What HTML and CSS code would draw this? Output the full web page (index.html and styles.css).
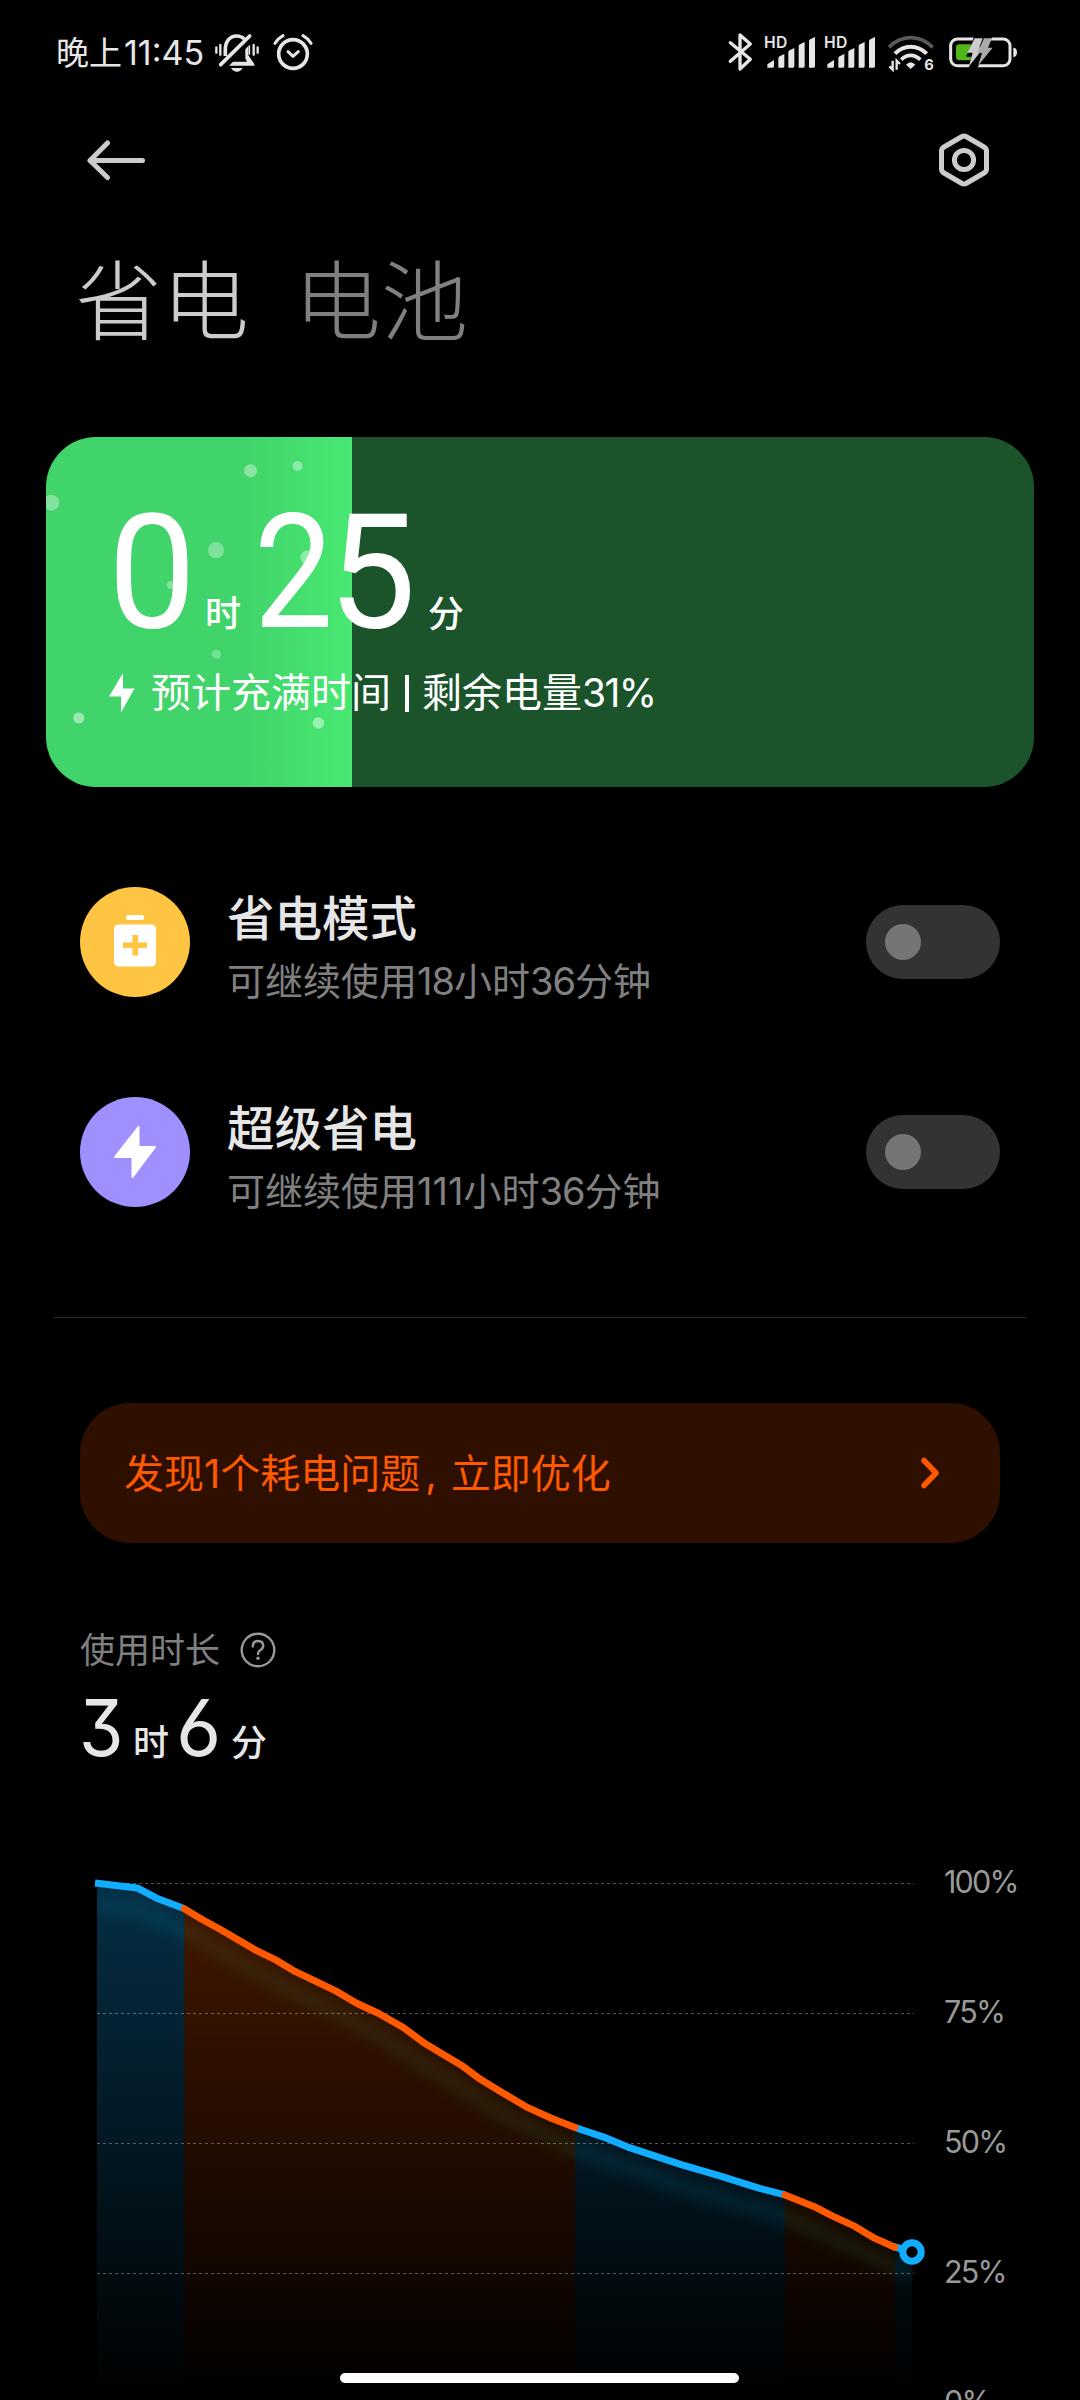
FILE: index.html
```html
<!DOCTYPE html>
<html lang="zh-CN">
<head>
<meta charset="utf-8">
<title>省电</title>
<link rel="stylesheet" href="styles.css">
</head>
<body>
<div class="phone">
  <header class="status">
    <div class="status-left">
      <span class="clock"><span class="clock-cjk">晚上</span>11:45</span>
      <svg class="ico-bell" width="46" height="40" viewBox="522 36 138 120" fill="none" stroke="#e6e6e6">
        <path d="M556 108V88c0-24 14-40 34-40 9 0 17 3 23 9" stroke-width="11"/>
        <path d="M625 78v28l18 26v5h-76l12-12h42l-5-10V88z" fill="#e6e6e6" stroke="none"/>
        <path d="M573 144h35c-4 7-10 11-17 11s-14-4-18-11z" fill="#e6e6e6" stroke="none"/>
        <path d="M542 134L629 48" stroke-width="11" stroke-linecap="round"/>
        <path d="M529 82v16M541 75v29M641 75v29M653 82v16" stroke-width="7" stroke-linecap="round"/>
        <path d="M628 78v24" stroke-width="5" stroke-linecap="round"/>
      </svg>
      <svg class="ico-alarm" width="40" height="38" viewBox="700 38 120 114" fill="none" stroke="#e6e6e6" stroke-linecap="round">
        <circle cx="760" cy="101" r="43" stroke-width="11"/>
        <path d="M706 69q8-14 24-23M814 69q-8-14-24-23" stroke-width="9"/>
        <path d="M745 94l15 14 16-14" stroke-width="9" stroke-linejoin="round"/>
      </svg>
    </div>
    <div class="status-right">
      <svg class="ico-bt" width="28" height="40" viewBox="82 35 84 120" fill="none" stroke="#e6e6e6" stroke-width="10" stroke-linecap="round" stroke-linejoin="round">
        <path d="M92 67l60 50-31 29V44l31 27-60 52"/>
      </svg>
      <svg class="ico-sig" width="52" height="36" viewBox="192 42 156 108" fill="#e6e6e6">
        <text x="192" y="83" class="hd">HD</text>
        <path d="M202 143v-10l20-13v19q0 4-4 4zM235 143v-28q0-4 4-6l14-7v37q0 4-4 4zM265 143V97q0-4 4-6l14-7v55q0 4-4 4zM296 143V79q0-4 4-6l14-7v73q0 4-4 4zM327 143V64q0-4 4-6l14-7v88q0 4-4 4z"/>
      </svg>
      <svg class="ico-sig" width="52" height="36" viewBox="192 42 156 108" fill="#e6e6e6">
        <text x="192" y="83" class="hd">HD</text>
        <path d="M202 143v-10l20-13v19q0 4-4 4zM235 143v-28q0-4 4-6l14-7v37q0 4-4 4zM265 143V97q0-4 4-6l14-7v55q0 4-4 4zM296 143V79q0-4 4-6l14-7v73q0 4-4 4zM327 143V64q0-4 4-6l14-7v88q0 4-4 4z"/>
      </svg>
      <svg class="ico-wifi" width="48" height="38" viewBox="561 42 144 114" fill="none" stroke="#e6e6e6">
        <path d="M567 82q28-29 65-29t66 29" stroke="#595959" stroke-width="11"/>
        <path d="M585 101q20-21 47-21t48 21" stroke-width="12"/>
        <path d="M604 119q12-13 28-13t29 13" stroke-width="11"/>
        <path d="M618 134q14-15 28 0l-14 13z" fill="#e6e6e6" stroke="none"/>
        <path d="M578 122v27l-10-10M590 149v-27l10 10" stroke-width="7"/>
        <text x="673" y="149" class="six" fill="#e6e6e6" stroke="none">6</text>
      </svg>
      <svg class="ico-batt" width="70" height="34" viewBox="744 47 210 102" fill="none">
        <rect x="752" y="56" width="178" height="80" rx="20" stroke="#e6e6e6" stroke-width="9"/>
        <path d="M940 82q11 0 11 14t-11 14z" fill="#e6e6e6"/>
        <path d="M778 72h40l-20 36h18l-4 12h-34q-10 0-10-10V82q0-10 10-10z" fill="#52b51a"/>
        <path d="M822 49h54l-14 42-30 52h-26l8-34h-14z" fill="#000"/>
        <path d="M824 54h24l-10 27h14l-46 58 12-42h-16z" fill="#ccc"/>
        <path d="M852 54h24l-12 28h14l-44 54 12-38h-14z" fill="#aaa"/>
      </svg>
    </div>
  </header>

  <nav class="topbar">
    <svg width="60" height="42" viewBox="0 0 60 42" fill="none" stroke="#ccc" stroke-width="5" stroke-linecap="round" stroke-linejoin="round">
      <path d="M21.500 4L4 21.500 21.500 38.500M4 21.500h52.500"/>
    </svg>
    <svg width="52" height="56" viewBox="0 0 52 56" fill="none" stroke="#ccc" stroke-width="5" stroke-linejoin="round">
      <path d="M24 4.500q2-1 4 0l18 10.500q2.500 1.500 2.500 4v18q0 2.500-2.500 4l-18 10.500q-2 1-4 0l-18-10.500q-2.500-1.500-2.500-4V19q0-2.500 2.500-4z"/>
      <circle cx="26" cy="28" r="9.600"/>
    </svg>
  </nav>

  <div class="tabs">
    <h1 class="tab tab-active">省电</h1>
    <h1 class="tab">电池</h1>
  </div>

  <section class="card">
    <svg class="bubbles" width="306" height="350" viewBox="46 437 306 350" fill="#fff">
      <circle cx="250.600" cy="470.700" r="6.500" opacity=".38"/>
      <circle cx="297.600" cy="466" r="5" opacity=".38"/>
      <circle cx="51.400" cy="502.700" r="8" opacity=".35"/>
      <circle cx="216" cy="550" r="8" opacity=".33"/>
      <circle cx="307.500" cy="557.500" r="7" opacity=".4"/>
      <circle cx="171" cy="585" r="4" opacity=".35"/>
      <circle cx="216.500" cy="654.300" r="4.600" opacity=".28"/>
      <circle cx="78.800" cy="718" r="5.500" opacity=".48"/>
      <circle cx="318.400" cy="723" r="5.800" opacity=".45"/>
    </svg>
    <div class="card-body">
      <div class="remain"><span class="big d0">0</span><span class="unit u0">时</span><span class="big d2">2</span><span class="big d5">5</span><span class="unit">分</span></div>
      <div class="charge">
        <svg width="26" height="40" viewBox="0 0 26 40" fill="#fff"><path d="M14 0v15.500h11.500L12 39.500V23.500H0z"/></svg>
        <span class="charge-text">预计充满时间<i class="bar"></i>剩余电量<span class="pct">31%</span></span>
      </div>
    </div>
  </section>

  <section class="modes">
    <div class="mode">
      <span class="badge amber">
        <svg width="44" height="54" viewBox="0 0 44 54" fill="#fff">
          <rect x="13" y="0" width="18" height="5" rx="2"/>
          <path fill-rule="evenodd" d="M6 9.500h32q5 0 5 5v32q0 5-5 5H6q-5 0-5-5v-32q0-5 5-5zm13.500 10.500v7.500H10v5.500h9.500v7.500h5.500V33h9v-5.500h-9V20z"/>
        </svg>
      </span>
      <div class="mode-text">
        <div class="mode-title">省电模式</div>
        <div class="mode-sub">可继续使用<span class="lat">18</span>小时<span class="lat">36</span>分钟</div>
      </div>
      <span class="toggle"><span class="knob"></span></span>
    </div>
    <div class="mode">
      <span class="badge violet">
        <svg width="44" height="54" viewBox="0 0 44 54" fill="#fff" stroke="#fff" stroke-width="2" stroke-linejoin="round">
          <path d="M25.500 2v20H42L19.500 52V32H2z"/>
        </svg>
      </span>
      <div class="mode-text">
        <div class="mode-title">超级省电</div>
        <div class="mode-sub">可继续使用<span class="ones">111</span>小时<span class="lat">36</span>分钟</div>
      </div>
      <span class="toggle"><span class="knob"></span></span>
    </div>
  </section>

  <hr class="rule">

  <section class="alert">
    <span class="alert-text">发现1个耗电问题<span class="comma">,</span>立即优化</span>
    <svg width="20" height="32" viewBox="0 0 20 32" fill="none" stroke="#ff5900" stroke-width="5.500" stroke-linecap="round" stroke-linejoin="round"><path d="M4 3.500L16 16 4 28.500"/></svg>
  </section>

  <section class="usage">
    <div class="usage-label">使用时长
      <svg width="36" height="36" viewBox="0 0 36 36" fill="none" stroke="#999" stroke-width="2.400">
        <circle cx="18" cy="18" r="16.300"/>
        <path d="M12.800 14.500q0-5.500 5.200-5.500t5.200 4.800q0 2.700-2.800 4.300-2.400 1.500-2.400 4" stroke-linecap="round"/>
        <circle cx="18" cy="26.200" r="1.700" fill="#999" stroke="none"/>
      </svg>
    </div>
    <div class="usage-value"><span class="mid m3">3</span><span class="unit u1">时</span><span class="mid m6">6</span><span class="unit">分</span></div>
  </section>

  <section class="chart">
    <svg class="plot" width="840" height="550" viewBox="90 1860 840 550" fill="none">
      <defs>
        <linearGradient id="blue" gradientUnits="userSpaceOnUse" x1="0" y1="1883" x2="0" y2="2403">
          <stop offset="0" stop-color="#12adff" stop-opacity=".27"/><stop offset="1" stop-color="#12adff" stop-opacity="0"/>
        </linearGradient>
        <linearGradient id="orange" gradientUnits="userSpaceOnUse" x1="0" y1="1883" x2="0" y2="2403">
          <stop offset="0" stop-color="#ff5900" stop-opacity=".27"/><stop offset="1" stop-color="#ff5900" stop-opacity="0"/>
        </linearGradient>
        <clipPath id="area"><path d="M97 1883L137.300 1888 156.700 1898.200 184.300 1908.600 201.700 1919.300 220 1929.300 256.700 1950.700 276.700 1960.400 295 1971.400 336.700 1991.400 356.700 2003.200 378.300 2013.200 403.300 2027.500 425 2043.600 461.700 2065.400 480.700 2079.600 503.300 2093.200 528.300 2107.900 552 2118.500 575 2127.500 603.700 2137.100 630.200 2147.900 681.200 2164.600 719 2175.700 760.400 2188.600 785 2194.800 813.800 2206.400 832.700 2216.100 855 2226.400 874 2237.900 894.700 2247.300 912 2252V2403H97z"/></clipPath>
        <clipPath id="cool"><path d="M97 1860h87.300v543H97zM575 1860h210v543H575zM894.700 1860H912v543h-17.300z"/></clipPath>
        <clipPath id="warm"><path d="M184.300 1860H575v543H184.300zM785 1860h109.700v543H785z"/></clipPath>
        <filter id="soft" x="-5%" y="-10%" width="110%" height="120%"><feGaussianBlur stdDeviation="6"/></filter>
        <path id="echo" filter="url(#soft)" transform="translate(0 22)" stroke-width="17" d="M97 1883L137.300 1888 184.300 1908.600 256.700 1950.700 378.300 2013.200 425 2043.600 503.300 2093.200 575 2127.500 681.200 2164.600 785 2194.800 855 2226.400 912 2252"/>
      </defs>
      <g clip-path="url(#area)">
        <g clip-path="url(#cool)">
          <path d="M97 1860h815v543H97z" fill="url(#blue)"/>
          <use href="#echo" stroke="#1e96be" stroke-opacity=".12"/>
        </g>
        <g clip-path="url(#warm)">
          <path d="M97 1860h815v543H97z" fill="url(#orange)"/>
          <use href="#echo" stroke="#3caa5a" stroke-opacity=".1"/>
        </g>
      </g>
      <path d="M97 1883.500h817M97 2013.500h817M97 2143.500h817M97 2273.500h817" stroke="#fff" stroke-opacity=".33" stroke-dasharray="3 3"/>
      <g stroke-width="7" stroke-linejoin="round">
        <path stroke="#12adff" d="M95 1882.900L137.300 1887.900 156.700 1898.200 184 1908.600M575 2127.500L603.700 2137.100 630.200 2147.900 681.200 2164.600 719 2175.700 760.400 2188.600 785 2194.800M893 2246.500L906 2250"/>
        <path stroke="#ff5900" stroke-linecap="round" d="M184.300 1908.800L201.700 1919.300 220 1929.300 256.700 1950.700 276.700 1960.400 295 1971.400 336.700 1991.400 356.700 2003.200 378.300 2013.200 403.300 2027.500 425 2043.600 461.700 2065.400 480.700 2079.600 503.300 2093.200 528.300 2107.900 552 2118.500 575 2127.500M785 2195L813.800 2206.400 832.700 2216.100 855 2226.400 874 2237.900 894.700 2247.300"/>
      </g>
      <circle cx="912" cy="2252" r="9.200" fill="#000" stroke="#12adff" stroke-width="7"/>
    </svg>
    <div class="axis"><span>100%</span><span>75%</span><span>50%</span><span>25%</span><span>0%</span></div>
  </section>
  <div class="home"></div>
</div>
</body>
</html>
```
FILE: styles.css
```css
* { box-sizing: border-box; margin: 0; padding: 0; }
body { background: #000; }
svg { display: block; flex: none; }
.phone {
  position: relative;
  width: 1080px;
  height: 2400px;
  overflow: hidden;
  background: #000;
  color: #e6e6e6;
  font-family: Inter, "Noto Sans CJK SC", sans-serif;
  white-space: nowrap;
}
.status { height: 106px; padding: 0 62px 0 56px; display: flex; justify-content: space-between; align-items: center; }
.status-left, .status-right { display: flex; align-items: center; }
.clock { font-size: 34px; line-height: 40px; width: 158px; letter-spacing: 0; }
.clock-cjk { font-size: 33px; letter-spacing: 0; margin-right: 2px; }
.ico-alarm { margin-left: 13px; margin-bottom: 2px; }
.ico-bell { margin-bottom: 2px; }
.ico-bt { margin-right: 9px; margin-bottom: 2px; }
.ico-sig { margin-right: 8px; margin-bottom: 2px; }
.ico-wifi { margin: 0 13px 0 3px; }
.hd { font-size: 47px; font-weight: 600; letter-spacing: 1px; }
.six { font-size: 44px; font-weight: 700; }

.topbar { height: 108px; padding: 0 90px 0 86px; display: flex; justify-content: space-between; align-items: center; }
.tabs { display: flex; gap: 45px; height: 223px; padding: 39px 0 0 75px; }
.tab { font-size: 87px; line-height: 100px; font-weight: 200; color: #808080; }
.tab-active { color: #ccc; }

.card {
  position: relative;
  width: 988px;
  height: 350px;
  margin-left: 46px;
  border-radius: 50px;
  overflow: hidden;
  background: linear-gradient(90deg, #41d46a 0, #41d46a 200px, #48e872 306px, #1b542b 306px);
  color: #fff;
}
.bubbles { position: absolute; left: 0; top: 0; }
.card-body { position: relative; padding: 60px 0 0 62px; }
.remain { display: flex; align-items: baseline; height: 171px; line-height: 151px; }
.big { font-family: Roboto, sans-serif; font-size: 160px; font-weight: 400; transform-origin: 0 0; }
.d0 { width: 80px; transform: scaleX(.98); }
.d2 { width: 74px; transform: scaleX(.88); }
.d5 { width: 100px; transform: scaleX(.98); }
.unit { font-size: 36px; font-weight: 500; }
.u0 { margin: 0 13px 0 17px; }
.charge { display: flex; align-items: center; gap: 16px; padding-left: 1px; }
.charge-text { font-size: 40px; line-height: 50px; display: flex; align-items: center; }
.bar { width: 4px; height: 37px; background: #fff; margin: 0 13px 0 14px; }
.pct { font-size: 39px; letter-spacing: -1.6px; }

.modes { padding-top: 100px; display: flex; flex-direction: column; gap: 100px; }
.mode { height: 110px; padding: 0 80px; display: flex; align-items: center; }
.badge { width: 110px; height: 110px; border-radius: 50%; display: flex; align-items: center; justify-content: center; }
.amber { background: #ffc542; }
.violet { background: #9e91ff; }
.mode-text { flex: 1; padding: 11px 0 0 37px; }
.mode-title { font-size: 47.5px; line-height: 60px; font-weight: 500; color: #e6e6e6; }
.mode-sub { font-size: 38px; line-height: 50px; color: #808080; margin-top: 7px; }
.lat { letter-spacing: -1px; }
.ones { letter-spacing: 0; }
.toggle { width: 134px; height: 74px; border-radius: 37px; background: #333; padding: 19px; }
.knob { display: block; width: 36px; height: 36px; border-radius: 50%; background: #757575; }
.rule { border: 0; height: 1px; width: 972px; margin: 110px 0 85px 54px; background: #2b2b2b; }

.alert {
  width: 920px;
  height: 140px;
  margin-left: 80px;
  padding: 0 60px 0 44px;
  border-radius: 50px;
  background: #2e0f00;
  color: #ff5900;
  display: flex;
  align-items: center;
  justify-content: space-between;
}
.alert-text { font-size: 40px; line-height: 50px; padding-top: 2px; }
.comma { margin: 0 14px 0 5px; }

.usage { padding: 82px 0 0 80px; }
.usage-label { font-size: 35px; line-height: 50px; color: #808080; display: flex; align-items: center; gap: 20px; }
.usage-value { display: flex; align-items: baseline; height: 90px; line-height: 90px; margin-top: 8px; }
.mid { font-family: Inter, sans-serif; font-size: 78px; font-weight: 400; font-feature-settings: "cv09", "cv03", "cv04"; transform-origin: 0 0; }
.m3 { width: 54px; margin-left: -1px; transform: scaleX(.92); }
.m6 { width: 55px; }
.u1 { margin-right: 7px; }
.chart { display: flex; margin-top: 87px; padding-left: 90px; }
.axis { padding: 2px 0 0 14px; display: flex; flex-direction: column; color: #999; font-size: 30.5px; line-height: 40px; gap: 90px; letter-spacing: -1.8px; }
.home { position: absolute; left: 340px; top: 2373px; width: 399px; height: 10px; border-radius: 5px; background: #fff; }
```
